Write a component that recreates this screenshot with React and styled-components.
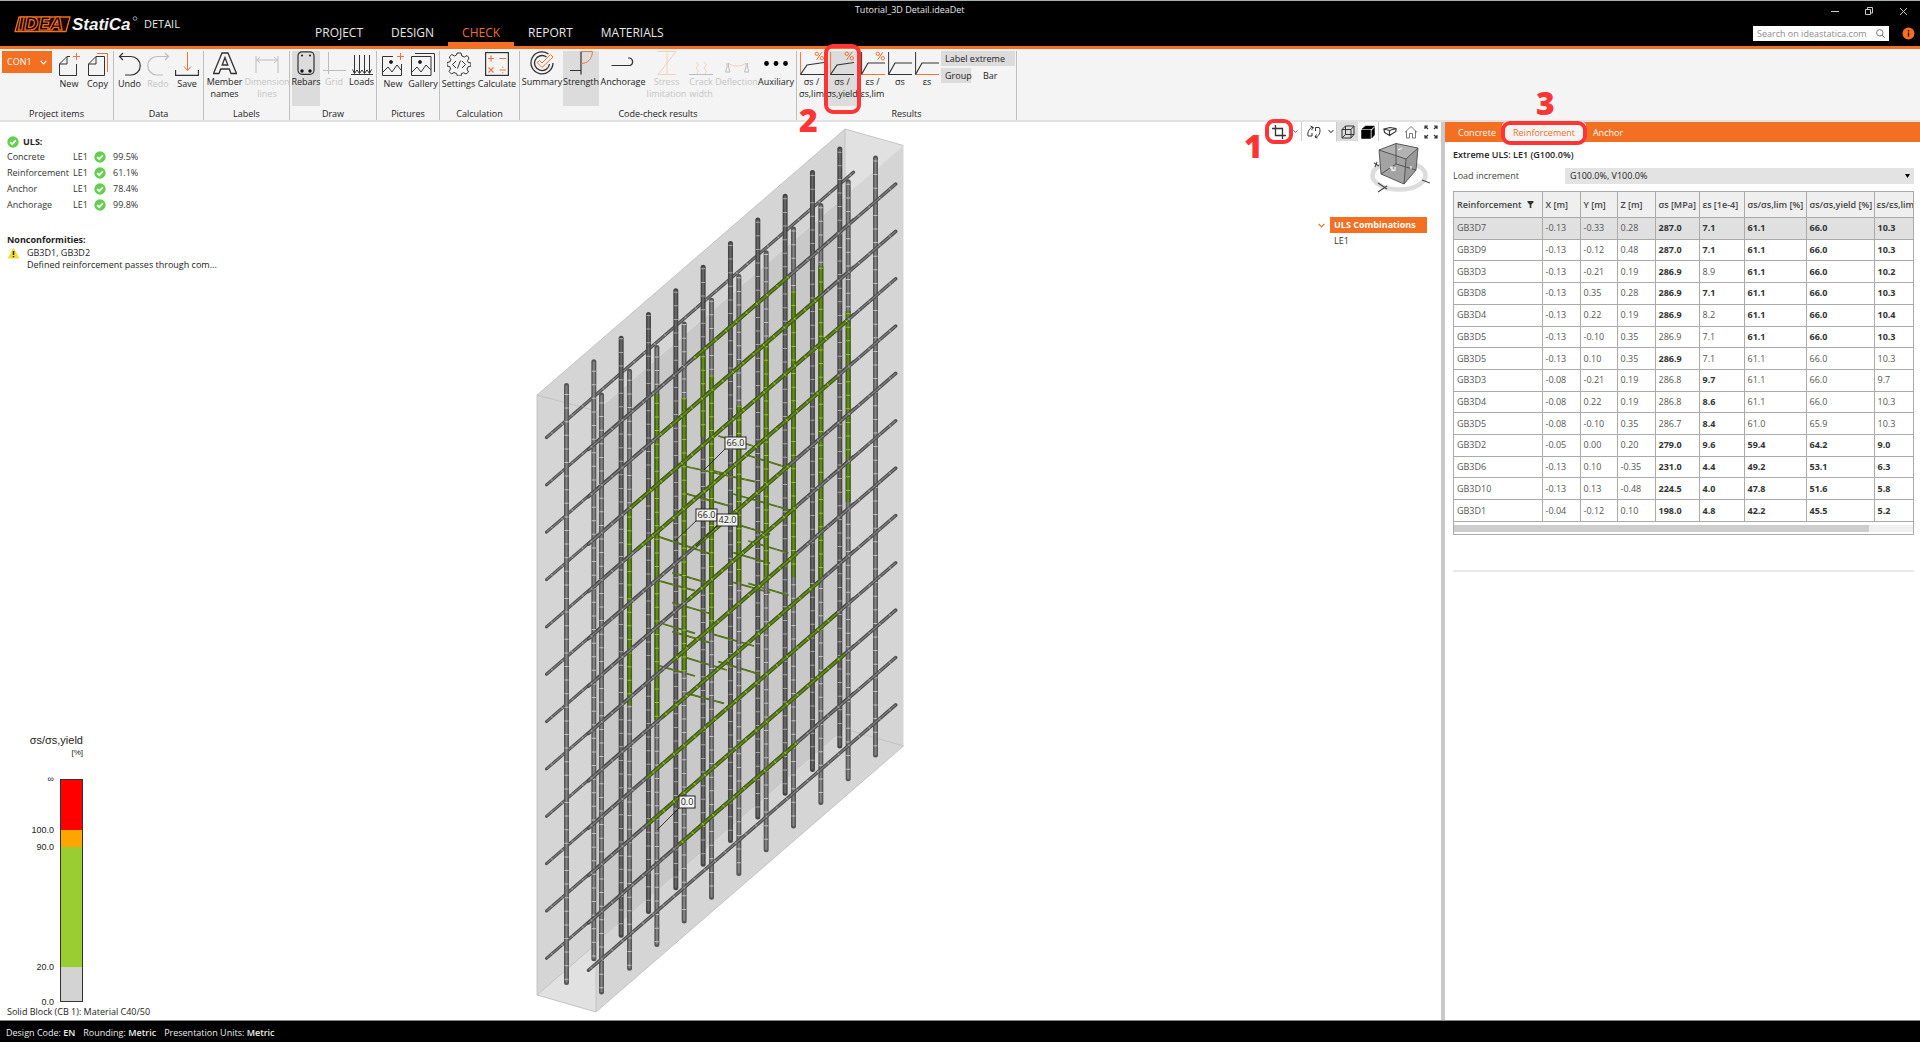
import React from "react";
import styled, { createGlobalStyle, css } from "styled-components";

const ORANGE = "#f36f21";
const RED = "#ff3535";
const UI = '"Open Sans", "Noto Sans", sans-serif';
const ARIAL = '"Liberation Sans", Arial, sans-serif';

const Global = createGlobalStyle`
  *, *::before, *::after { box-sizing: border-box; }
  body { margin: 0; background: #fff; color: #222; font-family: ${UI}; font-size: 9px; line-height: 12px; }
  button, input, select { font: inherit; color: inherit; margin: 0; padding: 0; border: 0; border-radius: 0; background: none; }
  button, select { cursor: pointer; }
  svg { display: block; flex: none; }
`;

const Shell = styled.div`
  min-height: 100vh;
  display: flex;
  flex-direction: column;
`;

/* ---------- header ---------- */
const Header = styled.header`
  display: grid;
  grid-template-columns: minmax(0, 17fr) auto minmax(0, 19fr);
  height: 49px;
  background: #000;
  color: #e8e8e8;
  border-top: 1px solid #a8b0b0;
  border-bottom: 3px solid ${ORANGE};
`;
const HeaderLeft = styled.div`
  display: flex;
`;
const Brand = styled.div`
  display: flex;
  align-items: center;
  flex: none;
  width: 301px;
  height: 46px;
  padding-left: 14px;
  gap: 6px;
  font-size: 11px;
`;
const Nav = styled.nav`
  display: flex;
  align-items: flex-end;
  height: 45px;
`;
const NavTab = styled.button`
  height: 27px;
  padding: 4px 14px 0;
  font-size: 12px;
  line-height: 16px;
  border-bottom: 4px solid ${(p) => (p.$on ? ORANGE : "transparent")};
  color: ${(p) => (p.$on ? ORANGE : "#e8e8e8")};
`;
const Title = styled.h1`
  margin: 2px 0 0;
  font-size: 9px;
  font-weight: 400;
  line-height: 14px;
`;
const HeaderRight = styled.div`
  display: flex;
  flex-direction: column;
  align-items: flex-end;
`;
const WindowButtons = styled.div`
  display: flex;
  height: 25px;
  button { width: 34px; height: 20px; display: grid; place-items: center; }
`;
const SearchRow = styled.div`
  display: flex;
  align-items: center;
  gap: 13px;
  padding-right: 5px;
`;
const Search = styled.label`
  display: flex;
  align-items: center;
  width: 136px;
  height: 15px;
  padding: 0 4px;
  background: #fff;
  input { flex: 1; min-width: 0; outline: 0; color: #333; }
  input::placeholder { color: #8c8c8c; opacity: 1; }
`;

/* ---------- ribbon ---------- */
const Ribbon = styled.div`
  display: flex;
  height: 73px;
  padding-top: 2px;
  background: #f4f4f4;
  border-bottom: 2px solid #e2e2e2;
`;
const Group = styled.section`
  display: flex;
  flex-direction: column;
  width: ${(p) => p.$w}px;
  border-right: 1px solid #c0c0c0;
`;
const GroupTools = styled.div`
  display: flex;
  height: 55px;
  padding-left: ${(p) => p.$pad || 0}px;
`;
const GroupName = styled.h2`
  margin: 0;
  padding-top: 1px;
  font-size: 9px;
  font-weight: 400;
  line-height: 14px;
  text-align: center;
`;
const Tool = styled.button`
  position: relative;
  display: flex;
  flex-direction: column;
  align-items: center;
  gap: ${(p) => (p.$low ? 2 : 1)}px;
  width: ${(p) => p.$w}px;
  height: 55px;
  padding-top: ${(p) => (p.$low ? 1 : 0)}px;
  color: ${(p) => (p.disabled ? "#c4c4c4" : "#222")};
  background: ${(p) => (p.$on ? "#dcdcdc" : "none")};
  line-height: 12px;
  white-space: pre;
  ${(p) => p.disabled && css`cursor: default;`}
`;
const ProjectSelect = styled.div`
  display: grid;
  width: 50px;
  height: 22px;
  margin-right: 3px;
  background: ${ORANGE};
  color: #fff;
  align-items: center;
  select { grid-area: 1 / 1; appearance: none; height: 22px; padding: 0 5px; outline: 0; }
  svg { grid-area: 1 / 1; justify-self: end; margin-right: 5px; pointer-events: none; }
`;
const LabelOptions = styled.div`
  display: flex;
  flex-wrap: wrap;
  align-content: flex-start;
  gap: 2px 8px;
  width: 74px;
`;
const Option = styled.button`
  height: 15px;
  width: ${(p) => p.$w}px;
  padding: 0 4px;
  text-align: left;
  background: ${(p) => (p.$on ? "#dcdcdc" : "none")};
`;

/* ---------- call-outs ---------- */
const Ring = styled.span`
  position: absolute;
  inset: ${(p) => p.$inset};
  border: 4px solid ${RED};
  border-radius: 9px;
  pointer-events: none;
  z-index: 3;
`;
const CallNumber = styled.span`
  position: absolute;
  left: ${(p) => p.$left}px;
  top: ${(p) => p.$top}px;
  font-size: 32px;
  line-height: 32px;
  font-weight: 800;
  color: ${RED};
  pointer-events: none;
  z-index: 3;
`;

/* ---------- viewport ---------- */
const Main = styled.main`
  flex: 1;
  display: flex;
`;
const Viewport = styled.section`
  flex: 1;
  display: grid;
  grid-template-columns: 1fr 381px 1fr;
`;
const LeftColumn = styled.div`
  display: flex;
  flex-direction: column;
  justify-content: space-between;
  padding: 13px 0 2px 7px;
`;
const ResultTitle = styled.h3`
  display: flex;
  align-items: center;
  gap: 4px;
  height: 14px;
  margin: 0;
  font-size: 9px;
  font-weight: 700;
`;
const ResultTable = styled.table`
  border-collapse: collapse;
  table-layout: fixed;
  width: 140px;
  color: #333;
  td, th { padding: 0; height: 16px; text-align: left; font-weight: 400; }
  th { width: 66px; }
  td:nth-child(2) { width: 21px; }
  td:nth-child(3) { width: 19px; }
`;
const Issues = styled.div`
  margin-top: 20px;
  h3 { margin: 0; font-size: 9px; line-height: 14px; }
  div { display: flex; gap: 7px; }
  p { margin: 0; }
`;
const Legend = styled.figure`
  margin: 0 0 4px;
  width: 76px;
  font-family: ${ARIAL};
  text-align: right;
  figcaption { font-size: 11px; line-height: 14px; }
  figcaption span { display: block; font-size: 8px; line-height: 12px; }
  ol { margin: 20px 0 0; padding: 0; list-style: none; }
`;
const Band = styled.li`
  display: flex;
  justify-content: flex-end;
  gap: 6px;
  height: ${(p) => p.$h}px;
  &::after {
    content: "";
    width: 23px;
    background: ${(p) => p.$c};
    border: solid #333;
    border-width: ${(p) => (p.$first ? "1px 1px 0" : p.$last ? "0 1px 1px" : "0 1px")};
  }
  span { align-self: flex-start; margin-top: -6px; }
`;
const ZeroTick = styled.div`
  height: 6px;
  padding-right: 29px;
  span { display: block; margin-top: -6px; }
`;
const Material = styled.p`
  margin: 0;
`;
const Scene = styled.div`
  padding-top: 2px;
`;
const RightColumn = styled.div`
  display: flex;
  flex-direction: column;
  align-items: flex-end;
`;
const ViewTools = styled.div`
  position: relative;
  display: flex;
  height: 19px;
`;
const ViewTool = styled.button`
  position: relative;
  display: grid;
  place-items: center;
  width: ${(p) => p.$w}px;
  height: 19px;
  background: ${(p) => (p.$on ? "#dcdcdc" : "none")};
  border-right: ${(p) => (p.$sep ? "1px solid #ccc" : "0")};
`;
const CubeBox = styled.div`
  padding: 1px 11px 0 0;
`;
const Combos = styled.div`
  display: grid;
  grid-template-columns: 12px 97px;
  align-items: center;
  margin-top: 23px;
  padding-right: 14px;
  box-sizing: content-box;
`;
const Combo = styled.button`
  grid-column: 2;
  height: 16px;
  padding: 0 4px;
  text-align: left;
  white-space: nowrap;
  font-weight: ${(p) => (p.$on ? 700 : 400)};
  color: ${(p) => (p.$on ? "#fff" : "#333")};
  background: ${(p) => (p.$on ? ORANGE : "none")};
`;

/* ---------- side panel ---------- */
const Panel = styled.aside`
  flex: none;
  width: 479px;
  border-left: 4px solid #c9c9c9;
`;
const Tabs = styled.div`
  display: flex;
  height: 20px;
  padding-left: 7px;
  background: ${ORANGE};
`;
const Tab = styled.button`
  position: relative;
  height: 20px;
  padding-top: 2px;
  width: ${(p) => p.$w}px;
  text-align: center;
  border-radius: 4px;
  color: ${(p) => (p.$on ? ORANGE : "#fff")};
  background: ${(p) => (p.$on ? "#f4f4f4" : "none")};
`;
const PanelBody = styled.div`
  padding: 6px 6px 0 8px;
`;
const PanelTitle = styled.h2`
  margin: 0;
  font-size: 9px;
  font-weight: 600;
  line-height: 14px;
`;
const Field = styled.label`
  display: flex;
  align-items: center;
  height: 16px;
  margin: 6px 0 7px;
  color: #444;
  > span:first-child { width: 112px; }
`;
const SelectBox = styled.span`
  flex: 1;
  display: grid;
  align-items: center;
  background: #e3e3e3;
  select { grid-area: 1 / 1; appearance: none; height: 16px; padding: 0 5px; outline: 0; color: #222; }
  svg { grid-area: 1 / 1; justify-self: end; margin-right: 4px; pointer-events: none; }
`;
const Scroller = styled.div`
  overflow: hidden;
  border: 1px solid #aaa;
  border-top: 0;
`;
const DataTable = styled.table`
  width: 100%;
  height: 331px;
  table-layout: fixed;
  border-collapse: collapse;
  color: #555;
  th, td {
    padding: 0 0 0 3px;
    text-align: left;
    white-space: nowrap;
    border: 1px solid #aaa;
  }
  th:first-child, td:first-child { border-left: 0; }
  th:last-child, td:last-child { border-right: 0; }
  th:last-child { padding-left: 2px; }
  th { height: 26px; font-weight: 600; color: #444; background: #efefef; }
  td { font-weight: 400; }
  th > span { display: flex; align-items: center; justify-content: space-between; padding-right: 8px; }
`;
const Row = styled.tr`
  background: ${(p) => (p.$on ? "#e0e0e0" : "#fff")};
`;
const Cell = styled.td`
  && { font-weight: ${(p) => (p.$b ? 700 : 400)}; color: ${(p) => (p.$b ? "#333" : "#555")}; }
`;
const Track = styled.div`
  height: 7px;
  margin: 3px 0 2px;
  background: #f0f0f0;
  div { width: 90.5%; height: 7px; background: #cdcdcd; }
`;
const Divider = styled.hr`
  margin: 35px 0 0;
  border: 0;
  border-top: 2px solid #e8e8e8;
`;

const Footer = styled.footer`
  display: flex;
  align-items: center;
  gap: 8px;
  height: 22px;
  padding: 2px 6px 0;
  background: #000;
  border-top: 1px solid #888;
  color: #eee;
  b { font-weight: 600; }
`;

/* ---------- drawings ---------- */
const K = "#333";
const O = "#f0743a";

const Ico = ({ children, w = 24, off, s = 1 }) => (
  <svg width={w} height="24" viewBox={`0 0 ${w} 24`} fill="none" stroke={K} strokeWidth={s} opacity={off ? 0.28 : 1} aria-hidden="true">
    {children}
  </svg>
);

const icons = {
  newItem: <Ico><path d="M10 4.5 2.500 12V23.500H19.500V12M10 4.500H13M10 4.500V12H2.500" /><path stroke={O} d="M19.500 1V8M16 4.500H23" /></Ico>,
  copy: <Ico><path d="M10 4.500H18.500V23.500H2.500V12ZM10 4.500V12H2.500" /><path stroke={O} d="M11 1.500H21.500V20" /></Ico>,
  undo: <Ico s={1.2}><path d="M5 1 1.500 4.500 5 8M1.500 4.500H13A9 9 0 0 1 13 23H7" /></Ico>,
  redo: <Ico off s={1.2}><path d="M19 1 22.500 4.500 19 8M22.500 4.500H11A9 9 0 0 0 11 23H17" /></Ico>,
  save: <Ico><path d="M.5 18V23.500H23.500V18" strokeWidth="1.3" /><path stroke={O} d="M12.500 0V18M9 14.500 12.500 18.500 16 14.500" /></Ico>,
  names: <Ico><path strokeWidth="1.3" d="M9 2H15L23.500 22.500H18L16.300 18H7.700L6 22.500H.5ZM12 6.500 9.200 14H14.800Z" /></Ico>,
  dim: <Ico off><path d="M1 5V22M23 5V22M2 9H22M5 6 1.500 9 5 12M19 6 22.500 9 19 12" /></Ico>,
  rebars: <Ico><rect x="4" y=".8" width="16" height="22.500" rx="4" strokeWidth="1.2" /><g fill="#111" stroke="none"><circle cx="8" cy="4.500" r="1" /><circle cx="16" cy="4.500" r="1" /><circle cx="8" cy="20" r="1.700" /><circle cx="16" cy="20" r="1.700" /></g></Ico>,
  grid: <Ico off><path d="M6.500 1V23M1 19.500H24" /></Ico>,
  loads: <Ico><path d="M1 23.500H23M4.500 4V22M9.500 4V22M14.500 4V22M19.500 4V22M2.500 18.500 4.500 22.500 7 19 9.500 22.500 12 19 14.500 22.500 17 19 19.500 22.500 21.500 18.500" /></Ico>,
  pic: <Ico><path d="M12 4.500H1.500V23.500H20.500V12M2 20 7 15 11 20 16 13 20 18" /><circle cx="10" cy="10" r="1.500" fill="#111" /><path stroke={O} d="M19.500 1V8M16 4.500H23" /></Ico>,
  gallery: <Ico><path d="M.5 4.500H20V23.500H.5ZM1 20 6 15 10 20 15 13 20 18M4 1.500H23.500V20" /><circle cx="9" cy="10" r="1.500" fill="#111" /></Ico>,
  settings: <Ico><path d="M10 1H14L14.800 4 17.500 5 20 3.500 22 6 20.500 8.500 21.200 10.500 24 11V14L21 14.800 20 17 21.500 20 19 22 16.500 20.800 14.500 21.500 14 24H10.500L9.500 21.500 7 20.500 4.500 22 2 19.500 3.500 17 2.700 14.500 0 14V10.500L3 9.800 3.800 7.500 2.200 5 4.800 2.500 7.500 4 9.500 3Z" /><path d="M9 9 5.500 12.500 9 16M15 9 18.500 12.500 15 16M13.500 8.500 10.500 16.500" /></Ico>,
  calc: <Ico><rect x=".6" y=".6" width="22.800" height="22.800" strokeWidth="1.200" /><path stroke={O} strokeWidth="1.200" d="M3 6.500H9M6 3.500V9.500M14.500 6.500H21M3.500 15.500 8.500 20.500M8.500 15.500 3.500 20.500M14.500 18H21M17.700 14.800V15.800M17.700 20.200V21.200" /></Ico>,
  summary: <Ico><path strokeWidth="1.300" d="M18.500 3A11 11 0 1 0 23 12M16.500 6A7.500 7.500 0 1 0 19.500 13" /><path stroke={O} fill="#f4f4f4" d="M7 11.500 9.500 9.500 12 12 20.500 3.500 23 6 12 16.500Z" /></Ico>,
  strength: <Ico><path d="M12 .5V23.500M1 19.500H12" strokeWidth="1.200" /><path stroke={O} d="M12 .5H23.500C23 8 19 12.500 12 12.500" /></Ico>,
  anchorage: <Ico><path strokeWidth="1.200" d="M.5 14.500H19A4 4 0 0 0 19 7H17" /></Ico>,
  stress: <Ico off><path stroke={O} d="M3 .5H21L3 23.500H21M12 2V23" /></Ico>,
  crack: <Ico off><path d="M0 23.500H24" /><path stroke={O} d="M7 11 9.500 14 7 17 9.500 20 8 23M15 11 17.500 14 15 17 17.500 20 16 23" /></Ico>,
  deflection: <Ico off><path stroke={O} d="M3 12C8 16 16 16 21 12" /><path d="M2 12V16L.5 21H5L3.500 16V12M21 12V16L19.500 21H24L22.500 16V12" /></Ico>,
  aux: <Ico><g fill="#000" stroke="none"><circle cx="2.500" cy="12.500" r="2.400" /><circle cx="12" cy="12.500" r="2.400" /><circle cx="21.500" cy="12.500" r="2.400" /></g></Ico>,
};

const Diagram = ({ slope, pct, xo, yo }) => (
  <Ico>
    <path stroke={yo ? O : K} d="M.6 1V23.500" />
    <path stroke={xo ? O : K} d="M.5 23.500H24" />
    <path strokeWidth="1.200" d={slope ? "M.5 23.500 7 14 24 11.500" : "M.5 23.500 7 12H24"} />
    {pct && <g stroke={O}><path d="M22 1 16.500 9" /><circle cx="16.800" cy="2.800" r="1.700" /><circle cx="21.800" cy="7.200" r="1.700" /></g>}
  </Ico>
);

const Chevron = ({ c = "#555", w = 7 }) => (
  <svg width={w} height="5" viewBox="0 0 7 5" fill="none" stroke={c} strokeWidth="1.200" aria-hidden="true"><path d="M.6 .8 3.500 3.800 6.400 .8" /></svg>
);

const Check = () => (
  <svg width="12" height="12" viewBox="0 0 12 12" aria-hidden="true">
    <circle cx="6" cy="6" r="5.700" fill="#62cf4e" />
    <path d="M3.200 6.200 5.200 8.200 8.800 4.300" fill="none" stroke="#fff" strokeWidth="1.800" />
  </svg>
);

const Logo = () => (
  <svg width="124" height="20" viewBox="0 0 124 20" role="img" aria-label="IDEA StatiCa">
    <path d="M5 3H56L52 17.500H1Z" fill="#160800" stroke={ORANGE} strokeWidth="1.300" strokeLinejoin="round" />
    <text x="4" y="16" fontFamily="DejaVu Sans, sans-serif" fontSize="17" fontWeight="700" fontStyle="italic" fill="#000" stroke={ORANGE} strokeWidth="1.200">IDEA</text>
    <text x="58" y="16" fontFamily="Liberation Sans, Arial, sans-serif" fontSize="17" fontWeight="700" fontStyle="italic" fill="#f4f4f4">StatiCa</text>
    <circle cx="121" cy="4.500" r="1.800" fill="none" stroke="#bbb" strokeWidth=".8" />
  </svg>
);

/* ---------- 3D model ---------- */
const SLOPE = 0.864;
const backX = Array.from({ length: 11 }, (_, i) => 566.5 + i * 27.33);
const frontX = Array.from({ length: 11 }, (_, i) => 601.5 + i * 27.33 + (i ? 0.7 : 0));
const backGreen = { 5: [355, 437] };
const frontGreen = {
  1: [508, 705], 2: [394, 720], 3: [398, 672], 4: [375, 633], 5: [405, 583],
  6: [345, 583], 7: [290, 577], 8: [266, 579], 9: [311, 502],
};
const diagGreen = {
  0: [694, 789], 1: [659, 820], 2: [630, 847], 3: [637, 837], 4: [694, 790], 5: [688, 797],
  6: [672, 797], 7: [662, 820], 8: [647, 837], 9: [647, 845], 10: [679, 797],
};
const stirrups = [
  [565, 48, 670, 78], [650, 105, 770, 142], [460, 138, 675, 185], [540, 150, 590, 162], [465, 220, 595, 257],
  [610, 222, 780, 270], [610, 310, 720, 343], [385, 350, 545, 403], [655, 363, 775, 399], [610, 398, 720, 430],
  [427, 458, 530, 488], [385, 482, 495, 512], [610, 487, 720, 518], [655, 490, 775, 526], [427, 548, 545, 582],
  [400, 612, 495, 640], [427, 635, 550, 671], [540, 640, 672, 678], [465, 712, 590, 750], [565, 725, 690, 763],
  [385, 737, 495, 768], [470, 820, 582, 850],
].map((s) => s.map((v, i) => v / 3 + (i % 2 ? 420 : 530)));

const tones = {
  dark: ["#454545", "#666", "#a8a8a8"],
  mid: ["#565656", "#848484", "#c2c2c2"],
  slant: ["#4c4c4c", "#7c7c7c", "#a4a4a4"],
  green: ["#435f12", "#648b1f", "#93c532"],
};

const Bar = ({ x1, y1, x2, y2, w = 5, tone = "mid" }) => {
  const [edge, core, tick] = tones[tone];
  const p = { x1, y1, x2, y2, fill: "none" };
  return (
    <g>
      <line {...p} stroke={edge} strokeWidth={w} strokeLinecap={tone === "green" ? "butt" : "round"} />
      <line {...p} stroke={core} strokeWidth={w * 0.4} />
      <line {...p} stroke={tick} strokeWidth={w - 1} strokeDasharray="1 12.600" strokeDashoffset={-(x1 % 9)} />
    </g>
  );
};

const Tag = ({ x, y, w = 21, text, lx, ly }) => (
  <g>
    <line x1={x} y1={y + 12} x2={lx} y2={ly} stroke="#222" strokeWidth=".9" />
    <rect x={x} y={y} width={w} height="12" fill="#fff" fillOpacity=".88" stroke="#222" />
    <text x={x + w / 2} y={y + 9} textAnchor="middle" fontFamily="Open Sans, Noto Sans, sans-serif" fontSize="9" fill="#222">{text}</text>
  </g>
);

const Model = () => (
  <svg width="381" height="892" viewBox="530 124 381 892" role="img" aria-label="Reinforced concrete block">
    <path d="M537 395 845 129 903.500 145.500V746L596 1012 537 995Z" fill="#d5d5d5" />
    <path d="M596 411 845 196V729L596 944Z" fill="#c9c9c9" />
    <path d="M845 129 903.500 145.500 845 196ZM537 995 596 944V1012Z" fill="#e1e1e1" />
    <path d="M537 395 845 129 903.500 145.500M537 395V995L596 1012 903.500 746M845 129V196M596 944V1012M537 995 596 944M845 729 903.500 746M537 395 596 411" fill="none" stroke="#bcbcbc" strokeWidth=".8" />
    <path d="M596 411 903.500 145.500M596 944 845 729" fill="none" stroke="#dedede" strokeWidth=".8" />

    <Bar x1={546.5} y1={437.5} x2={853.5} y2={172.3} w={3.2} tone="slant" />
    {Array.from({ length: 11 }, (_, i) => i + 1).map((k) => (
      <Bar key={k} x1={546.5} y1={437.5 + k * 47.35} x2={853.5} y2={172.3 + k * 47.35} w={3} tone="slant" />
    ))}
    {backX.map((x, i) => (
      <Bar key={x} x1={x} y1={385.5 - i * 23.66} x2={x} y2={982.5 - i * 23.66} tone={i < 2 ? "mid" : "dark"} />
    ))}
    {Object.entries(backGreen).map(([i, [a, b]]) => (
      <Bar key={i} x1={backX[i]} y1={a} x2={backX[i]} y2={b} tone="green" />
    ))}
    {stirrups.map(([x1, y1, x2, y2]) => (
      <Bar key={`${x1}-${y1}`} x1={x1} y1={y1} x2={x2} y2={y2} w={1.7} tone="green" />
    ))}
    {frontX.map((x, i) => (
      <Bar key={x} x1={x} y1={395 - i * 23.7} x2={x} y2={992 - i * 23.7} />
    ))}
    {Object.entries(frontGreen).map(([i, [a, b]]) => (
      <Bar key={i} x1={frontX[i]} y1={a} x2={frontX[i]} y2={b} tone="green" />
    ))}
    {Array.from({ length: 12 }, (_, k) => {
      const y = (x) => 184 + 47.35 * k + (895.7 - x) * SLOPE;
      const g = diagGreen[k];
      return (
        <g key={k}>
          <Bar x1={588.5} y1={y(588.5)} x2={895.7} y2={184 + 47.35 * k} w={3.4} tone="slant" />
          {g && <Bar x1={g[0]} y1={y(g[0])} x2={g[1]} y2={y(g[1])} w={3.8} tone="green" />}
        </g>
      );
    })}
    <Tag x={725} y={437} text="66.0" lx={704} ly={470} />
    <Tag x={696} y={509} text="66.0" lx={675} ly={541} />
    <Tag x={717} y={514} text="42.0" lx={696} ly={546} />
    <Tag x={679} y={796} w={16} text="0.0" lx={657} ly={830} />
  </svg>
);

const ViewCube = () => (
  <svg width="60" height="52" viewBox="0 0 60 52" fill="none" role="img" aria-label="View cube">
    <ellipse cx="29" cy="33.500" rx="26.500" ry="14" stroke="#dcdcdc" strokeWidth="4.500" />
    <path d="M9 8 26 1.500 48 6 46 26 34 42 11 32Z" fill="#a3a3a3" />
    <path d="M9 8 26 1.500 48 6 36 17Z" fill="#b2b2b2" />
    <path d="M36 17 48 6 46 28 34 42Z" fill="#999" />
    <path d="M9 8 26 1.500 48 6 36 17ZM9 8 11 32 34 42 36 17M48 6 46 28 34 42M26 1.500V22L11 32M26 22 46 28" stroke="#4d4d4d" strokeWidth=".9" />
    <path d="M28 8 32 6M20 25 24 29M22 24V29M25 25V29M41 24V27" stroke="#eee" strokeWidth="1.300" />
    <path d="M4 21 9 24M7 20 5 25M8 41 17 47M8 50 17 44M52 38 60 41" stroke="#444" strokeWidth="1.100" />
  </svg>
);

const V = ({ children, fill = "none" }) => (
  <svg width="14" height="14" viewBox="0 0 14 14" fill={fill} stroke={K} aria-hidden="true">{children}</svg>
);

const results = [
  ["Concrete", "99.5%"],
  ["Reinforcement", "61.1%"],
  ["Anchor", "78.4%"],
  ["Anchorage", "99.8%"],
];

/* An asterisk marks the governing value, shown in bold. */
const rows = `GB3D7 -0.13 -0.33 0.28 287.0* 7.1* 61.1* 66.0* 10.3*
GB3D9 -0.13 -0.12 0.48 287.0* 7.1* 61.1* 66.0* 10.3*
GB3D3 -0.13 -0.21 0.19 286.9* 8.9 61.1* 66.0* 10.2*
GB3D8 -0.13 0.35 0.28 286.9* 7.1* 61.1* 66.0* 10.3*
GB3D4 -0.13 0.22 0.19 286.9* 8.2 61.1* 66.0* 10.4*
GB3D5 -0.13 -0.10 0.35 286.9 7.1 61.1* 66.0* 10.3*
GB3D5 -0.13 0.10 0.35 286.9* 7.1 61.1 66.0 10.3
GB3D3 -0.08 -0.21 0.19 286.8 9.7* 61.1 66.0 9.7
GB3D4 -0.08 0.22 0.19 286.8 8.6* 61.1 66.0 10.3
GB3D5 -0.08 -0.10 0.35 286.7 8.4* 61.0 65.9 10.3
GB3D2 -0.05 0.00 0.20 279.0* 9.6* 59.4* 64.2* 9.0*
GB3D6 -0.13 0.10 -0.35 231.0* 4.4* 49.2* 53.1* 6.3*
GB3D10 -0.13 0.13 -0.48 224.5* 4.0* 47.8* 51.6* 5.8*
GB3D1 -0.04 -0.12 0.10 198.0* 4.8* 42.2* 45.5* 5.2*`.split("\n").map((r) => r.split(" "));

const columns = [
  ["X [m]", 38], ["Y [m]", 37], ["Z [m]", 38], ["σs [MPa]", 44], ["εs [1e-4]", 45],
  ["σs/σs,lim [%]", 62], ["σs/σs,yield [%]", 68],
];

const ribbon = [
  { name: "Data", w: 90, pad: 1, low: true, tools: [["Undo", icons.undo, 29], ["Redo", icons.redo, 28, "off"], ["Save", icons.save, 30]] },
  { name: "Labels", w: 86, pad: 0, tools: [["Member\nnames", icons.names, 41], ["Dimension\nlines", icons.dim, 44, "off"]] },
  { name: "Draw", w: 87, pad: 2, tools: [["Rebars", icons.rebars, 28, "on"], ["Grid", icons.grid, 28, "off"], ["Loads", icons.loads, 27]] },
  { name: "Pictures", w: 63, pad: 1, low: true, tools: [["New", icons.pic, 30], ["Gallery", icons.gallery, 30]] },
  { name: "Calculation", w: 80, pad: 0, low: true, tools: [["Settings", icons.settings, 37], ["Calculate", icons.calc, 40]] },
  {
    name: "Code-check results", w: 277, pad: 1,
    tools: [["Summary", icons.summary, 42], ["Strength", icons.strength, 36, "on"], ["Anchorage", icons.anchorage, 48], ["Stress\nlimitation", icons.stress, 39, "off"], ["Crack\nwidth", icons.crack, 30, "off"], ["Deflection", icons.deflection, 41, "off"], ["Auxiliary", icons.aux, 38]],
  },
];

const ToolButton = ({ label, icon, w, state, low, children }) => (
  <Tool type="button" $w={w} $on={state === "on"} $low={low} disabled={state === "off"}>
    {icon}
    <span>{label}</span>
    {children}
  </Tool>
);

export default function App() {
  return (
    <Shell>
      <Global />
      <Header>
        <HeaderLeft>
          <Brand><Logo /><span>DETAIL</span></Brand>
          <Nav>
            {["PROJECT", "DESIGN", "CHECK", "REPORT", "MATERIALS"].map((t) => (
              <NavTab key={t} type="button" $on={t === "CHECK"}>{t}</NavTab>
            ))}
          </Nav>
        </HeaderLeft>
        <Title>Tutorial_3D Detail.ideaDet</Title>
        <HeaderRight>
          <WindowButtons>
            <button type="button" aria-label="Minimize"><svg width="9" height="9" stroke="#ccc"><path d="M0 4.500H8" /></svg></button>
            <button type="button" aria-label="Restore"><svg width="8" height="8" fill="none" stroke="#ccc"><path d="M.5 2.500H5.500V7.500H.5ZM2.500 2V.5H7.500V6H6" /></svg></button>
            <button type="button" aria-label="Close"><svg width="9" height="9" stroke="#ccc"><path d="M1 1 8 8M8 1 1 8" /></svg></button>
          </WindowButtons>
          <SearchRow>
            <Search>
              <input aria-label="Search on ideastatica.com" placeholder="Search on ideastatica.com" />
              <svg width="9" height="9" fill="none" stroke="#777"><circle cx="3.800" cy="3.800" r="3.200" /><path d="M6 6 8.700 8.700" /></svg>
            </Search>
            <svg width="13" height="13" viewBox="0 0 13 13"><circle cx="6.500" cy="6.500" r="6" fill={ORANGE} /><path d="M6.500 3V4.500M6.500 5.500V9.500" stroke="#400" strokeWidth="1.400" /></svg>
          </SearchRow>
        </HeaderRight>
      </Header>

      <Ribbon>
        <Group $w={114}>
          <GroupTools $pad={2}>
            <ProjectSelect>
              <select aria-label="Project item" defaultValue="CON1"><option>CON1</option></select>
              <Chevron c="#fff" />
            </ProjectSelect>
            <ToolButton label="New" icon={icons.newItem} w={28} low />
            <ToolButton label="Copy" icon={icons.copy} w={29} low />
          </GroupTools>
          <GroupName>Project items</GroupName>
        </Group>
        {ribbon.map((g) => (
          <Group key={g.name} $w={g.w}>
            <GroupTools $pad={g.pad}>
              {g.tools.map(([label, icon, w, state]) => (
                <ToolButton key={label} label={label} icon={icon} w={w} state={state} low={g.low} />
              ))}
            </GroupTools>
            <GroupName>{g.name}</GroupName>
          </Group>
        ))}
        <Group $w={220}>
          <GroupTools>
            <ToolButton label={"σs /\nσs,lim"} icon={<Diagram slope pct yo />} w={29} />
            <ToolButton label={"σs /\nσs,yield"} icon={<Diagram slope pct yo />} w={32} state="on">
              <Ring $inset="-7px -3px -8px -2px" />
              <CallNumber $left={-27} $top={53}>2</CallNumber>
            </ToolButton>
            <ToolButton label={"εs /\nεs,lim"} icon={<Diagram pct xo />} w={29} />
            <ToolButton label="σs" icon={<Diagram />} w={26} />
            <ToolButton label="εs" icon={<Diagram xo />} w={28} />
            <LabelOptions>
              <Option type="button" $w={74} $on>Label extreme</Option>
              <Option type="button" $w={30} $on>Group</Option>
              <Option type="button" $w={30}>Bar</Option>
            </LabelOptions>
          </GroupTools>
          <GroupName>Results</GroupName>
        </Group>
      </Ribbon>

      <Main>
        <Viewport>
          <LeftColumn>
            <div>
              <ResultTitle><Check />ULS:</ResultTitle>
              <ResultTable>
                <tbody>
                  {results.map(([n, v]) => (
                    <tr key={n}><th scope="row">{n}</th><td>LE1</td><td><Check /></td><td>{v}</td></tr>
                  ))}
                </tbody>
              </ResultTable>
              <Issues>
                <h3>Nonconformities:</h3>
                <div>
                  <svg width="13" height="12" viewBox="0 0 13 12" aria-hidden="true"><path d="M6.500 .5 12.500 11.500H.5Z" fill="#f7dc2e" /><path d="M6.500 4V8M6.500 9V10.300" stroke="#222" strokeWidth="1.500" /></svg>
                  <p>GB3D1, GB3D2<br />Defined reinforcement passes through com...</p>
                </div>
              </Issues>
            </div>
            <div>
              <Legend>
                <figcaption>σs/σs,yield<span>[%]</span></figcaption>
                <ol>
                  <Band $h={51} $c="#ff0000" $first><span>∞</span></Band>
                  <Band $h={17} $c="#ffa500"><span>100.0</span></Band>
                  <Band $h={120} $c="#9acd32"><span>90.0</span></Band>
                  <Band $h={35} $c="#d3d3d3" $last><span>20.0</span></Band>
                </ol>
                <ZeroTick><span>0.0</span></ZeroTick>
              </Legend>
              <Material>Solid Block (CB 1): Material C40/50</Material>
            </div>
          </LeftColumn>

          <Scene><Model /></Scene>

          <RightColumn>
            <ViewTools>
              <CallNumber $left={-24} $top={8}>1</CallNumber>
              <ViewTool type="button" aria-label="Section" $w={22}>
                <V><path d="M3.500 0V10.500H14M0 3.500H10.500V14" strokeWidth="1.300" /></V>
                <Ring $inset="-3px -3px -3px -3px" />
              </ViewTool>
              <ViewTool type="button" aria-label="Section options" $w={12} $sep><Chevron w={5} /></ViewTool>
              <ViewTool type="button" aria-label="Rotate" $w={23}><V><path d="M1 11C0 7 3 2 6 2.500M3.500 1 6.500 2.500 4.500 5M1 11H5V8M8 12C12 12 14 7 12.500 3M8.500 6V2.500H12.500M10.500 13 8 12 9.500 9.500" /></V></ViewTool>
              <ViewTool type="button" aria-label="Rotate options" $w={12} $sep><Chevron w={6} /></ViewTool>
              <ViewTool type="button" aria-label="Transparent" $w={21} $on><V><path d="M1 4.500H10V13H1ZM1 4.500 4.500 1H13V9.500L10 13M10 4.500 13 1M4.500 1V9.500H13M4.500 9.500 1 13" /></V></ViewTool>
              <ViewTool type="button" aria-label="Solid" $w={21} $sep><V><path d="M.5 5H9.500V13.500H.5ZM1 4 4.500 1H13.500L10.500 4ZM10.800 5.500 13.500 2.500V10L10.800 13Z" fill="#000" stroke="#000" strokeWidth=".5" /></V></ViewTool>
              <ViewTool type="button" aria-label="Perspective" $w={22}><V><path strokeWidth="1.200" d="M1 4 7 2.500 13.200 3.500 6.500 5.500ZM1 4 1.500 7.500 6.500 10.500V5.500M13.200 3.500 12.800 6.500 6.500 10.500" /></V></ViewTool>
              <ViewTool type="button" aria-label="Home" $w={20}><svg width="14" height="14" viewBox="0 0 14 14" fill="none" stroke="#777"><path d="M.8 7.500 7 1.500 13.200 7.500M2.500 6V13H5.500V8.500H8.500V13H11.500V6" /></svg></ViewTool>
              <ViewTool type="button" aria-label="Fit" $w={20}><V><path d="M1 4V1H4M1 1 4 4M10 1H13V4M13 1 10 4M1 10V13H4M1 13 4 10M10 13H13V10M13 13 10 10" strokeWidth="1.200" /></V></ViewTool>
            </ViewTools>
            <CubeBox><ViewCube /></CubeBox>
            <Combos>
              <Chevron c={ORANGE} />
              <Combo type="button" $on>ULS Combinations</Combo>
              <Combo type="button">LE1</Combo>
            </Combos>
          </RightColumn>
        </Viewport>

        <Panel>
          <Tabs role="tablist">
            <Tab role="tab" type="button" $w={50}>Concrete</Tab>
            <Tab role="tab" type="button" $w={84} $on aria-selected="true">
              Reinforcement
              <Ring $inset="-1px -1px -3px -1px" />
              <CallNumber $left={34} $top={-35}>3</CallNumber>
            </Tab>
            <Tab role="tab" type="button" $w={44}>Anchor</Tab>
          </Tabs>
          <PanelBody>
            <PanelTitle>Extreme ULS: LE1 (G100.0%)</PanelTitle>
            <Field>
              <span>Load increment</span>
              <SelectBox>
                <select defaultValue="a"><option value="a">G100.0%, V100.0%</option></select>
                <svg width="5" height="4" aria-hidden="true"><path d="M0 0H5L2.500 4Z" fill="#000" /></svg>
              </SelectBox>
            </Field>
            <Scroller>
              <DataTable>
                <colgroup>
                  <col style={{ width: 88 }} />
                  {columns.map(([n, w]) => <col key={n} style={{ width: w }} />)}
                  <col />
                </colgroup>
                <thead>
                  <tr>
                    <th scope="col"><span>Reinforcement<svg width="7" height="7" aria-hidden="true"><path d="M.5 0H6.500V1.200L4.300 3.700V7H2.700V3.700L.5 1.200Z" fill="#333" /></svg></span></th>
                    {columns.map(([n]) => <th key={n} scope="col">{n}</th>)}
                    <th scope="col">εs/εs,lim</th>
                  </tr>
                </thead>
                <tbody>
                  {rows.map((r, i) => (
                    <Row key={i} $on={i === 0}>
                      {r.map((c, j) => <Cell key={j} $b={c.endsWith("*")}>{c.replace("*", "")}</Cell>)}
                    </Row>
                  ))}
                </tbody>
              </DataTable>
              <Track><div /></Track>
            </Scroller>
            <Divider />
          </PanelBody>
        </Panel>
      </Main>

      <Footer>
        <span>Design Code: <b>EN</b></span>
        <span>Rounding: <b>Metric</b></span>
        <span>Presentation Units: <b>Metric</b></span>
      </Footer>
    </Shell>
  );
}
